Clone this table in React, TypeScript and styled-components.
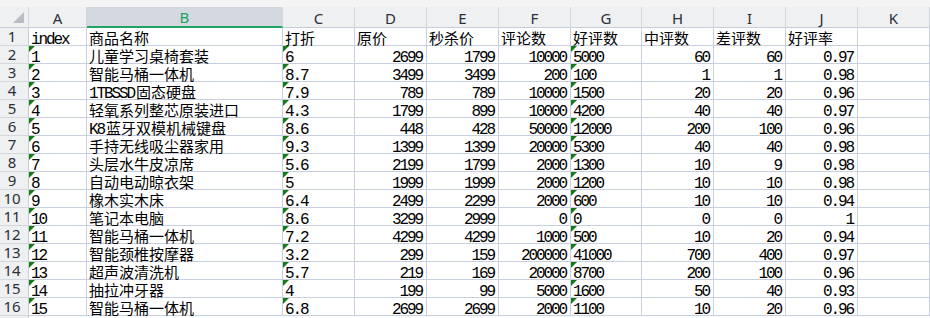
import React from 'react'
import styled, { createGlobalStyle } from 'styled-components'

const GlobalStyle = createGlobalStyle`
  body {
    margin: 0;
    background: #ffffff;
  }
`

const columns = ['A', 'B', 'C', 'D', 'E', 'F', 'G', 'H', 'I', 'J', 'K']
const widths = [58, 196, 72, 72, 72, 72, 71, 72, 72, 72, 72]
const selected = 'B'

// columns holding numbers stored as text (green marker, left aligned)
const textCols = [0, 2, 6]

const header = ['index', '商品名称', '打折', '原价', '秒杀价', '评论数', '好评数', '中评数', '差评数', '好评率', '']

const rows: string[][] = [
  ['1', '儿童学习桌椅套装', '6', '2699', '1799', '10000', '5000', '60', '60', '0.97'],
  ['2', '智能马桶一体机', '8.7', '3499', '3499', '200', '100', '1', '1', '0.98'],
  ['3', '1TBSSD固态硬盘', '7.9', '789', '789', '10000', '1500', '20', '20', '0.96'],
  ['4', '轻氧系列整芯原装进口', '4.3', '1799', '899', '10000', '4200', '40', '40', '0.97'],
  ['5', 'K8蓝牙双模机械键盘', '8.6', '448', '428', '50000', '12000', '200', '100', '0.96'],
  ['6', '手持无线吸尘器家用', '9.3', '1399', '1399', '20000', '5300', '40', '40', '0.98'],
  ['7', '头层水牛皮凉席', '5.6', '2199', '1799', '2000', '1300', '10', '9', '0.98'],
  ['8', '自动电动晾衣架', '5', '1999', '1999', '2000', '1200', '10', '10', '0.98'],
  ['9', '橡木实木床', '6.4', '2499', '2299', '2000', '600', '10', '10', '0.94'],
  ['10', '笔记本电脑', '8.6', '3299', '2999', '0', '0', '0', '0', '1'],
  ['11', '智能马桶一体机', '7.2', '4299', '4299', '1000', '500', '10', '20', '0.94'],
  ['12', '智能颈椎按摩器', '3.2', '299', '159', '200000', '41000', '700', '400', '0.97'],
  ['13', '超声波清洗机', '5.7', '219', '169', '20000', '8700', '200', '100', '0.96'],
  ['14', '抽拉冲牙器', '4', '199', '99', '5000', '1600', '50', '40', '0.93'],
  ['15', '智能马桶一体机', '6.8', '2699', '2699', '2000', '1100', '10', '20', '0.96'],
]

const Sheet = styled.div`
  width: 930px;
  height: 318px;
  overflow: hidden;
  background: #ffffff;
`

const TopStrip = styled.div`
  height: 7px;
  background: #f4f4f4;
`

const Grid = styled.div`
  display: grid;
  grid-template-columns: 29px ${widths.map(w => `${w}px`).join(' ')};
  grid-template-rows: 21px;
  grid-auto-rows: 18px;
`

const Corner = styled.div`
  position: relative;
  background: #eef0f2;
  border-right: 1px solid #d4d8de;
  border-bottom: 1px solid #c6ccd8;
  box-sizing: border-box;

  &::after {
    content: '';
    position: absolute;
    right: 4px;
    bottom: 4px;
    border-style: solid;
    border-width: 0 0 11px 11px;
    border-color: transparent transparent #b9bcc1 transparent;
  }
`

const ColHead = styled.div<{ $active?: boolean }>`
  box-sizing: border-box;
  display: flex;
  align-items: center;
  justify-content: center;
  padding-top: 2px;
  background: ${p => (p.$active ? '#d4d8e0' : '#eef0f2')};
  border-right: 1px solid #d4d8de;
  border-bottom: ${p => (p.$active ? '2px solid #21a366' : '1px solid #c6ccd8')};
  color: ${p => (p.$active ? '#21a366' : '#2b2f36')};
  font-family: 'Noto Sans', 'Open Sans', sans-serif;
  font-size: 15px;
  line-height: 1;
`

const RowHead = styled.div`
  box-sizing: border-box;
  padding-right: 4px;
  background: #eef0f2;
  border-right: 1px solid #c6ccd8;
  border-bottom: 1px solid #d4d8de;
  color: #2b2f36;
  text-align: center;
  font-family: 'Noto Sans', 'Open Sans', sans-serif;
  font-size: 15px;
  line-height: 17px;
`

const Cell = styled.div<{ $right?: boolean; $marked?: boolean }>`
  position: relative;
  box-sizing: border-box;
  padding: ${p => (p.$right ? '0 2px 0 0' : '0 0 0 2px')};
  border-right: 1px solid #c8cfe0;
  border-bottom: 1px solid #c8cfe0;
  color: #000000;
  text-align: ${p => (p.$right ? 'right' : 'left')};
  font-family: 'Noto Sans CJK SC', sans-serif;
  font-size: 15px;
  line-height: 17px;
  white-space: nowrap;

  ${p =>
    p.$marked &&
    `&::before {
      content: '';
      position: absolute;
      left: 0;
      top: 0;
      border-style: solid;
      border-width: 6px 6px 0 0;
      border-color: #127c12 transparent transparent transparent;
    }`}
`

const Text = styled.span`
  display: inline-block;
  vertical-align: top;
  height: 17px;
  line-height: 17px;
  position: relative;
  top: 1px;
`

// SimSun-like half-width digits: mono face squeezed to 7.5px per char
const Latin = styled.span`
  font-family: 'Liberation Mono', monospace;
  font-size: 16px;
  letter-spacing: -2.1px;
  margin-right: 2.1px;
`

const Han = styled.span`
  font-family: 'Noto Sans CJK SC', sans-serif;
`

const isNumber = (s: string) => /^-?\d+(\.\d+)?$/.test(s)

function Runs({ text }: { text: string }) {
  const parts = text.match(/[\x00-\x7f]+|[^\x00-\x7f]+/g) || []
  return (
    <Text>
      {parts.map((p, i) =>
        /[\x00-\x7f]/.test(p) ? <Latin key={i}>{p}</Latin> : <Han key={i}>{p}</Han>
      )}
    </Text>
  )
}

export default function App() {
  const body = rows.map(r => [...r, ''])
  return (
    <Sheet>
      <GlobalStyle />
      <TopStrip />
      <Grid>
        <Corner />
        {columns.map(c => (
          <ColHead key={c} $active={c === selected}>{c}</ColHead>
        ))}

        <RowHead>1</RowHead>
        {header.map((h, i) => (
          <Cell key={i}><Runs text={h} /></Cell>
        ))}

        {body.map((r, ri) => (
          <React.Fragment key={ri}>
            <RowHead>{ri + 2}</RowHead>
            {r.map((v, ci) => {
              const asText = textCols.includes(ci)
              return (
                <Cell key={ci} $right={!asText && isNumber(v)} $marked={asText}>
                  <Runs text={v} />
                </Cell>
              )
            })}
          </React.Fragment>
        ))}
        <RowHead />
      </Grid>
    </Sheet>
  )
}
